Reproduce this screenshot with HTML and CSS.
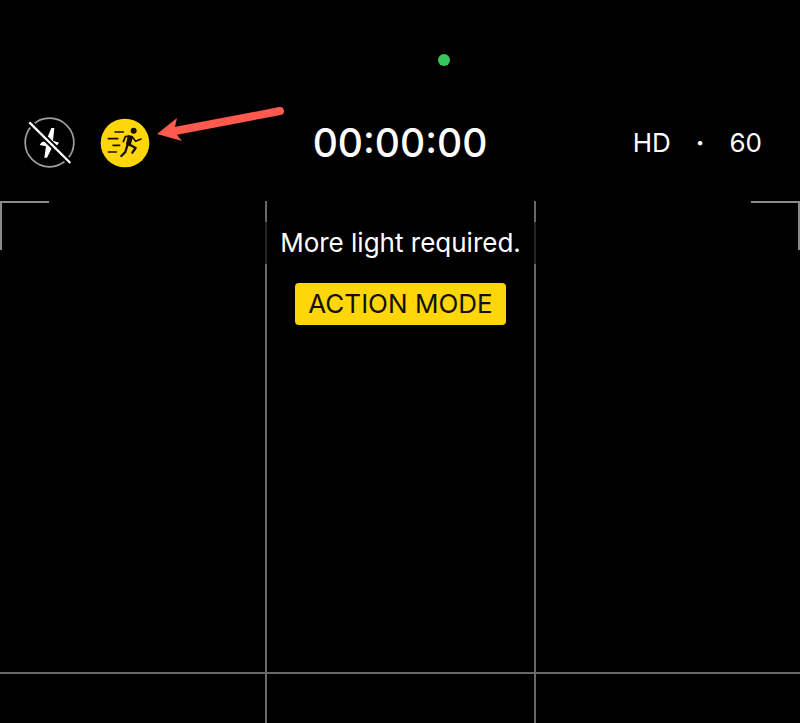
FILE: index.html
```html
<!DOCTYPE html>
<html lang="en">
<head>
    <meta charset="UTF-8">
    <meta name="viewport" content="width=device-width, initial-scale=1.0">
    <title>Camera</title>
    <link rel="stylesheet" href="styles.css">
</head>
<body>

    <div class="status-bar">
        <span class="camera-dot"></span>
    </div>

    <header class="top-bar">
        <div class="toggles">
            <button class="icon-button" aria-label="Flash off">
                <svg viewBox="0 0 153 153">
                    <circle cx="76.500" cy="76.500" r="73" fill="none" stroke="#a0a0a0" stroke-width="5"/>
                    <path d="M82 33 91 33 87 71 105 77 100 84 86 88 69 122 61 122 66 88 47 84 53 76 66 72Z" fill="#fff"/>
                    <path d="M16 16 139 138" stroke="#000" stroke-width="18"/>
                    <path d="M16 16 139 138" stroke="#fff" stroke-width="7"/>
                </svg>
            </button>
            <button class="icon-button action" aria-label="Action mode">
                <svg viewBox="0 0 150 150" fill="none" stroke="#151000" stroke-linecap="round" stroke-linejoin="round">
                    <circle cx="75" cy="75" r="73" fill="#ffd60a" stroke="none"/>
                    <path d="M45 42H70M25 62H53M39 82H59M25 102H49" stroke-width="5"/>
                    <circle cx="101" cy="38" r="9" fill="#151000" stroke="none"/>
                    <path d="M86 55 96 56 89 82 81 78Z" fill="#151000" stroke-width="6"/>
                    <path d="M87 54 76 56 70 71M97 57 107 70 123 63" stroke-width="5"/>
                    <path d="M87 79 107 90 97 104M82 82 76 102 64 114" stroke-width="7"/>
                </svg>
            </button>
            <svg class="pointer" viewBox="0 0 129 36" aria-hidden="true">
                <path d="M18 24 123 4" stroke="#ff5a4d" stroke-width="8" stroke-linecap="round" fill="none"/>
                <path d="M0 27 20 11 17 24 25 34Z" fill="#ff5a4d"/>
            </svg>
        </div>
        <div class="timer">00:00:00</div>
        <div class="format">
            <button class="format-button">HD</button>
            <span class="separator">·</span>
            <button class="format-button">60</button>
        </div>
    </header>

    <main class="viewfinder">
        <div class="cell"></div>
        <div class="cell center">
            <p class="message">More light required.</p>
            <p class="mode">ACTION MODE</p>
        </div>
        <div class="cell"></div>
        <div class="cell"></div>
        <div class="cell center"></div>
        <div class="cell"></div>
        <span class="corner left"></span>
        <span class="corner right"></span>
    </main>

</body>
</html>
```
FILE: styles.css
```css
:root {
    --yellow: #ffd60a;
    --grid-line: #686868;
    --corner-line: #8a8a8a;
}

* { box-sizing: border-box; }

body {
    margin: 0;
    min-height: 100vh;
    display: flex;
    flex-direction: column;
    background: #000;
    color: #fff;
    font-family: Inter, "Liberation Sans", sans-serif;
}

button {
    padding: 0;
    border: none;
    background: none;
    color: inherit;
    font: inherit;
    cursor: pointer;
}

.status-bar {
    display: flex;
    justify-content: center;
    padding: 54px 0 51px 87px;
}

.camera-dot {
    width: 12px;
    height: 12px;
    border-radius: 50%;
    background: #34c759;
}

.top-bar {
    display: grid;
    grid-template-columns: 1fr auto 1fr;
    align-items: center;
    padding: 0 24px 33px;
}

.toggles {
    position: relative;
    display: flex;
    align-items: center;
    gap: 25px;
}

.icon-button {
    width: 51px;
    height: 51px;
}

.icon-button.action { width: 50px; height: 50px; }

.icon-button svg { display: block; width: 100%; }

/* arrow laid over the bar, pointing at the action button */
.pointer {
    position: absolute;
    left: 133px;
    top: -10px;
    width: 129px;
    height: 36px;
}

.timer {
    font-size: 39px;
    font-weight: 500;
    font-feature-settings: "case";
    line-height: 50px;
}

.format {
    display: flex;
    justify-content: flex-end;
    gap: 25px;
    padding-right: 14px;
    font-size: 26px;
    line-height: 32px;
}

.separator { font-weight: 700; }

.viewfinder {
    flex: 1;
    position: relative;
    display: grid;
    grid-template-columns: 265fr 271fr 264fr;
    grid-template-rows: 1fr 51px;
}

.cell:nth-child(n+4) { border-top: 2px solid var(--grid-line); }

.cell.center {
    border-left: 2px solid var(--grid-line);
    border-right: 2px solid var(--grid-line);
    text-align: center;
}

/* the message backdrop also dims the grid lines on both sides */
.message {
    margin: 21px -2px 19px;
    background: rgba(0, 0, 0, 0.65);
    font-size: 26px;
    line-height: 42px;
    white-space: nowrap;
}

.mode {
    display: inline-block;
    margin: 0;
    padding: 0 13px;
    border-radius: 4px;
    background: var(--yellow);
    color: #141000;
    font-size: 26px;
    line-height: 42px;
    white-space: nowrap;
}

.corner {
    position: absolute;
    top: 0;
    width: 49px;
    height: 49px;
    border-top: 2px solid var(--corner-line);
}

.corner.left { left: 0; border-left: 2px solid var(--corner-line); }
.corner.right { right: 0; border-right: 2px solid var(--corner-line); }
```
